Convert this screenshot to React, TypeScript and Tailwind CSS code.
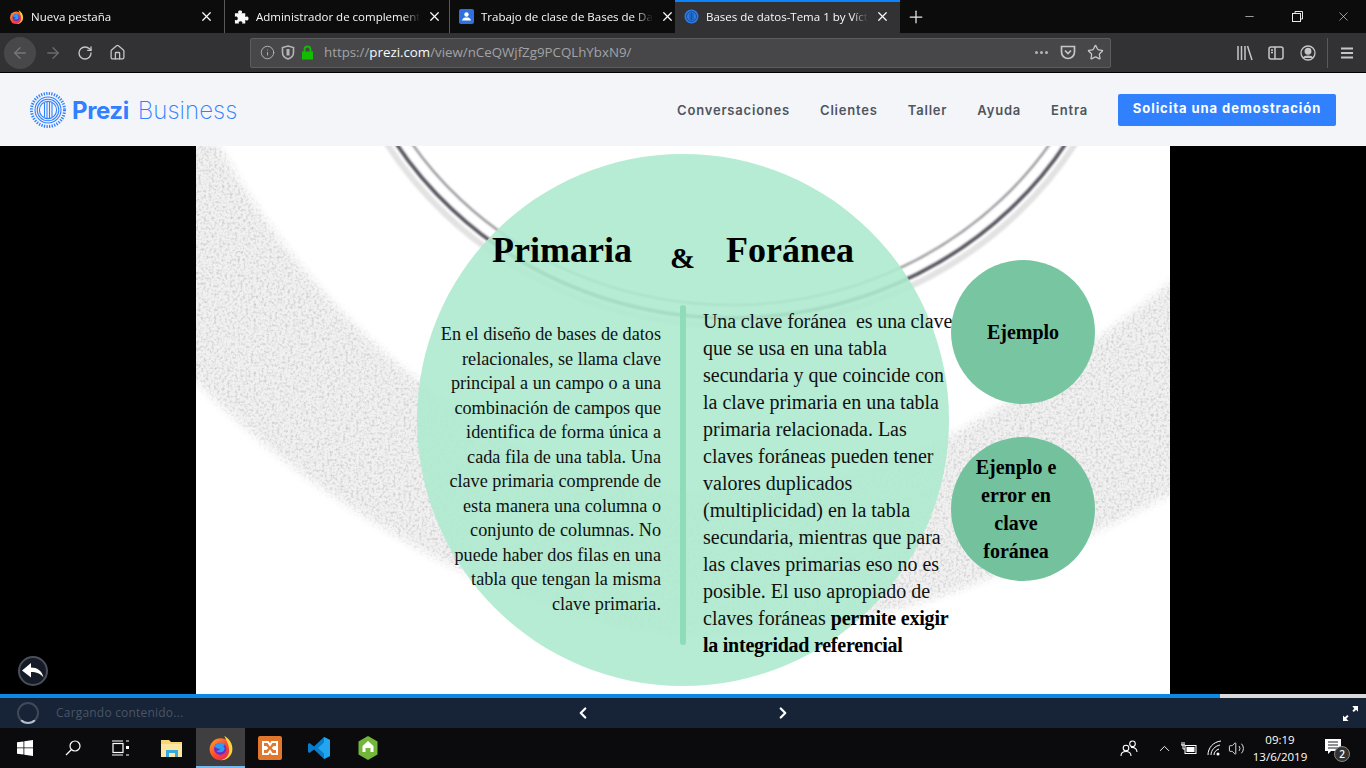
import React from 'react';
import {
  ArrowLeft,
  ArrowRight,
  RotateCw,
  Home,
  Info,
  Star,
  X,
  Plus,
  Minus,
  ChevronLeft,
  ChevronRight,
  ChevronUp,
  Volume2,
} from 'lucide-react';

const FirefoxIcon = ({ size = 16 }: { size?: number }) => (
  <svg width={size} height={size} viewBox="0 0 32 32">
    <defs>
      <linearGradient id="ff" x1="0" y1="0" x2="1" y2="1">
        <stop offset="0" stopColor="#ffa62e" />
        <stop offset="0.5" stopColor="#ff4a2a" />
        <stop offset="1" stopColor="#d81f6b" />
      </linearGradient>
    </defs>
    <circle cx="15.500" cy="17.500" r="13.500" fill="url(#ff)" />
    <path d="M20 1c6 3.500 10.500 9.500 10 17-.5 7.500-6.500 13-14 13 6.500-2 10-6.500 10-12 0-7-3.500-12-6-18z" fill="#ffd43a" />
    <circle cx="15" cy="17" r="7.500" fill="#6a2bc4" />
    <path d="M8 14c2-4 7-5.500 11-4 2.500 1 1.500 3.500-1 3.500 2.500 1 3.500 3.500 1.500 6-2.500 2.500-7 2.500-9.500 0 2.500 0 5-1 5-2.500-2.500 0-5.500-1-7-3z" fill="#2d9cf0" />
  </svg>
);

const PuzzleIcon = () => (
  <svg width="16" height="16" viewBox="0 0 16 16" fill="#f9f9fa">
    <path d="M1 4h4c-1-1-1-3 1.500-3S9 3 8 4h4v4c1-1 3.500-1 3.500 1.500S13 12 12 11v4H8.500c1-1 .5-2.500-1.500-2.500S4.500 14 5.500 15H1v-4c1 1 3 .5 3-1.500S2 7 1 8z" />
  </svg>
);

const ClassroomIcon = () => (
  <svg width="15" height="15" viewBox="0 0 15 15">
    <rect width="15" height="15" rx="2" fill="#2f6fde" />
    <circle cx="7.500" cy="5.500" r="2.200" fill="#fff" />
    <path d="M3 11.500c.5-2.500 2.500-3 4.500-3s4 .5 4.500 3z" fill="#fff" />
  </svg>
);

const PreziFavicon = () => (
  <svg width="15" height="15" viewBox="0 0 15 15" fill="none">
    <circle cx="7.500" cy="7.500" r="7" fill="#2f7ce0" />
    <circle cx="7.500" cy="7.500" r="5" stroke="#0d3f8a" strokeWidth="0.800" />
    <path d="M6 4v7M7.500 3.500v8M9 4v7" stroke="#0d3f8a" strokeWidth="0.700" />
  </svg>
);

const PreziLogo = () => (
  <svg width="36" height="36" viewBox="0 0 36 36" fill="none" stroke="#3181ff">
    <circle cx="18" cy="18" r="16.500" strokeWidth="3" strokeDasharray="1.300 1.300" />
    <circle cx="18" cy="18" r="13" strokeWidth="1.100" />
    <circle cx="18" cy="18" r="10.800" strokeWidth="1.100" />
    <circle cx="18" cy="18" r="8.600" strokeWidth="1.100" />
    <path d="M14.500 11v14M17 10v16M19.500 10v16M22 11v14" strokeWidth="1.100" />
  </svg>
);

const Tab = ({
  icon,
  title,
  active,
  divider,
}: {
  icon: React.ReactNode;
  title: string;
  active?: boolean;
  divider?: boolean;
}) => (
  <div
    className={`relative flex h-full w-[225px] shrink-0 items-center gap-[7px] pl-[9px] pr-[11px] ${
      active ? 'bg-[#323234]' : ''
    }`}
  >
    {active && <div className="absolute left-0 right-0 top-0 h-[2px] bg-[#0a84ff]" />}
    <div className="flex w-[15px] shrink-0 items-center justify-center">{icon}</div>
    <div className="flex-1 whitespace-nowrap pt-px text-[11.500px] text-[#f9f9fa] [mask-image:linear-gradient(to_right,black_90%,transparent)]">
      {title}
    </div>
    <X size={15} strokeWidth={2} className="shrink-0 text-[#f9f9fa]" />
    {divider && <div className="absolute bottom-0 right-0 top-0 w-px bg-[#58585a]" />}
  </div>
);

const TabBar = () => (
  <div className="flex h-[33px] items-stretch bg-[#0c0c0d] font-['Open_Sans',sans-serif]">
    <Tab icon={<FirefoxIcon />} title="Nueva pestaña" divider />
    <Tab icon={<PuzzleIcon />} title="Administrador de complement" divider />
    <Tab icon={<ClassroomIcon />} title="Trabajo de clase de Bases de Da" />
    <Tab icon={<PreziFavicon />} title="Bases de datos-Tema 1 by Víct" active />
    <div className="ml-[6px] flex items-center">
      <Plus size={20} strokeWidth={1.500} className="text-[#e8e8e8]" />
    </div>
    <div className="ml-auto flex items-center text-[#e8e8e8]">
      <div className="flex w-[46px] justify-center pr-[4px]">
        <Minus size={13} strokeWidth={1.200} />
      </div>
      <div className="flex w-[46px] justify-center">
        <svg width="11" height="11" viewBox="0 0 11 11" fill="none" stroke="currentColor">
          <rect x="0.500" y="2.500" width="8" height="8" />
          <path d="M3 2.500V.5h7.500V8H8.500" />
        </svg>
      </div>
      <div className="flex w-[46px] justify-center">
        <X size={15} strokeWidth={1} />
      </div>
    </div>
  </div>
);

const ToolbarIcons = () => (
  <div className="ml-auto flex items-center text-[#c6c6c8]">
    <svg width="18" height="16" viewBox="0 0 18 16" fill="none" stroke="currentColor" strokeWidth="1.500">
      <path d="M2 1v14M5.500 1v14M9 1v14M11.500 1l4.500 14" />
    </svg>
    <svg width="16" height="14" viewBox="0 0 16 14" fill="none" stroke="currentColor" strokeWidth="1.500" className="ml-[14px]">
      <rect x="1" y="1" width="14" height="12" rx="2" />
      <path d="M7 1v12M3 4h2M3 6.500h2" />
    </svg>
    <svg width="16" height="16" viewBox="0 0 16 16" fill="none" stroke="currentColor" strokeWidth="1.300" className="ml-[16px]">
      <circle cx="8" cy="8" r="7" />
      <circle cx="8" cy="6.300" r="2.800" fill="currentColor" />
      <path d="M3.500 13c1-2.500 8-2.500 9 0" fill="currentColor" />
    </svg>
    <div className="ml-[11px] h-[30px] w-px bg-[#5a5a5c]" />
    <svg width="14" height="12" viewBox="0 0 14 12" stroke="currentColor" strokeWidth="1.800" className="ml-[12px] mr-[12px]">
      <path d="M1 1.500h12M1 6h12M1 10.500h12" />
    </svg>
  </div>
);

const Toolbar = () => (
  <div className="flex h-[40px] items-center border-b border-black bg-[#323234] font-['Open_Sans',sans-serif]">
    <div className="ml-[4px] flex h-[32px] w-[32px] items-center justify-center rounded-full bg-[#48484a]">
      <ArrowLeft size={18} strokeWidth={1.800} className="text-[#77777a]" />
    </div>
    <ArrowRight size={18} strokeWidth={1.800} className="ml-[8px] text-[#6b6b6e]" />
    <RotateCw size={16} strokeWidth={2} className="ml-[15px] text-[#c6c6c8]" />
    <Home size={17} strokeWidth={1.800} className="ml-[16px] text-[#c6c6c8]" />
    <div className="ml-[124px] flex h-[30px] w-[861px] items-center rounded-[2px] border border-[#5d5d5f] bg-[#474749] pl-[9px] pr-[6px]">
      <Info size={15} strokeWidth={1.500} className="text-[#b5b5b8]" />
      <svg width="14" height="15" viewBox="0 0 14 15" fill="none" stroke="#b5b5b8" strokeWidth="1.600" className="ml-[6px]">
        <path d="M7 1l5.500 1.500v5c0 3-2.500 5.500-5.500 6.500-3-1-5.500-3.500-5.500-6.500v-5z" />
        <path d="M7 4v6.500" strokeWidth="3" />
      </svg>
      <svg width="13" height="15" viewBox="0 0 13 15" fill="none" className="ml-[6px]">
        <path d="M3.500 7V4.500a3 3 0 0 1 6 0V7" stroke="#12bc00" strokeWidth="1.800" />
        <rect x="1" y="6.500" width="11" height="8" fill="#12bc00" />
      </svg>
      <div className="ml-[10px] whitespace-nowrap pt-px text-[13.300px] text-[#a3a3a6]">
        https://<span className="text-[#f9f9fa]">prezi.com</span>/view/nCeQWjfZg9PCQLhYbxN9/
      </div>
      <div className="ml-auto flex items-center gap-[2px] pr-[1px]">
        <span className="h-[3px] w-[3px] rounded-full bg-[#b5b5b8]" />
        <span className="h-[3px] w-[3px] rounded-full bg-[#b5b5b8]" />
        <span className="h-[3px] w-[3px] rounded-full bg-[#b5b5b8]" />
      </div>
      <svg width="16" height="15" viewBox="0 0 16 15" fill="none" stroke="#c6c6c8" strokeWidth="1.700" className="ml-[11px]">
        <path d="M1.500 1.500h13v5.500a6.500 6.500 0 0 1-13 0z" />
        <path d="M5 5.500l3 3 3-3" />
      </svg>
      <Star size={17} strokeWidth={1.800} className="ml-[11px] text-[#c6c6c8]" />
    </div>
    <ToolbarIcons />
  </div>
);

const SiteNav = () => (
  <div className="flex h-[73px] items-center bg-[#f4f5f9] pl-[30px] pr-[30px] font-['Inter',sans-serif]">
    <PreziLogo />
    <div className="ml-[6px] flex items-baseline pt-[2px] text-[24px] text-[#3181ff]">
      <span className="font-bold tracking-[-0.4px]">Prezi</span>
      <span className="ml-[9px] font-extralight tracking-[0.05px]">Business</span>
    </div>
    <nav className="ml-auto flex items-center gap-[30px] pt-[2px] text-[13px] font-semibold tracking-[0.8px] text-[#4f5560]">
      <span>Conversaciones</span>
      <span>Clientes</span>
      <span>Taller</span>
      <span>Ayuda</span>
      <span>Entra</span>
    </nav>
    <button className="ml-[30px] flex h-[32px] w-[218px] items-center justify-center rounded-[2px] bg-[#3181ff] pb-px text-[13px] font-bold tracking-[0.95px] text-white">
      Solicita una demostración
    </button>
  </div>
);

const leftLines = [
  'En el diseño de bases de datos',
  'relacionales, se llama clave',
  'principal a un campo o a una',
  'combinación de campos que',
  'identifica de forma única a',
  'cada fila de una tabla. Una',
  'clave primaria comprende de',
  'esta manera una columna o',
  'conjunto de columnas. No',
  'puede haber dos filas en una',
  'tabla que tengan la misma',
  'clave primaria.',
];

const rightLines = [
  'que se usa en una tabla',
  'secundaria y que coincide con',
  'la clave primaria en una tabla',
  'primaria relacionada. Las',
  'claves foráneas pueden tener',
  'valores duplicados',
  '(multiplicidad) en la tabla',
  'secundaria, mientras que para',
  'las claves primarias eso no es',
  'posible. El uso apropiado de',
];

const SlideBackdrop = () => (
  <svg width="974" height="548" viewBox="0 0 974 548" fill="none" className="absolute inset-0">
    <defs>
      <filter id="grit" x="-5%" y="-5%" width="110%" height="110%">
        <feTurbulence type="fractalNoise" baseFrequency="0.38" numOctaves="2" seed="4" result="n" />
        <feColorMatrix
          in="n"
          type="matrix"
          values="0 0 0 0 0.6  0 0 0 0 0.6  0 0 0 0 0.6  0 0 0 2.4 -1.05"
          result="speck"
        />
        <feGaussianBlur in="SourceAlpha" stdDeviation="4" result="soft" />
        <feComposite in="speck" in2="soft" operator="in" result="grain" />
        <feFlood floodColor="#f1f1f1" result="base" />
        <feComposite in="base" in2="soft" operator="in" result="tint" />
        <feMerge>
          <feMergeNode in="tint" />
          <feMergeNode in="grain" />
        </feMerge>
      </filter>
      <filter id="soft-line" x="-5%" y="-5%" width="110%" height="110%">
        <feGaussianBlur stdDeviation="0.800" />
      </filter>
    </defs>
    <path
      d="M-20 -10L18 -10C70 90 150 180 223 235C320 310 420 345 490 345C600 345 680 325 754 290C830 250 900 195 990 125L990 340C900 387 800 435 707 461C620 485 550 492 490 490C400 485 320 450 250 417C160 370 70 310 -20 215Z"
      fill="#000"
      filter="url(#grit)"
    />
    <g filter="url(#soft-line)">
      <ellipse cx="535" cy="-200" rx="403" ry="380" stroke="#e2e2e2" strokeWidth="6" />
      <ellipse cx="535" cy="-200" rx="395" ry="372" stroke="#4e4e56" strokeWidth="3.500" />
      <ellipse cx="535" cy="-200" rx="382" ry="359" stroke="#85858a" strokeWidth="2" />
    </g>
  </svg>
);

const Slide = () => (
  <div className="relative h-full w-[974px] overflow-hidden bg-white font-['Liberation_Serif',serif] text-[#111]">
    <SlideBackdrop />
    <div className="absolute left-[221px] top-[8px] h-[532px] w-[532px] rounded-full bg-[#adeace]/90" />
    <div className="absolute left-[484px] top-[159px] h-[340px] w-[6px] rounded-full bg-[#8fdcb8]" />

    <h1 className="absolute left-[296px] top-[82px] text-[36px] font-bold leading-[44px] text-black">Primaria</h1>
    <div className="absolute left-[474px] top-[92px] text-[30px] font-bold leading-[40px] text-black">&amp;</div>
    <h1 className="absolute left-[530px] top-[82px] text-[36px] font-bold leading-[44px] text-black">Foránea</h1>

    <div className="absolute right-[509px] top-[176px] whitespace-nowrap text-right text-[18.200px] leading-[24.550px]">
      {leftLines.map((line) => (
        <div key={line}>{line}</div>
      ))}
    </div>

    <div className="absolute left-[507px] top-[162px] whitespace-pre text-[20px] leading-[27px]">
      <div className="tracking-[-0.13px]">Una clave foránea  es una clave</div>
      {rightLines.map((line) => (
        <div key={line}>{line}</div>
      ))}
      <div>
        claves foráneas <b className="tracking-[-0.2px] text-black">permite exigir</b>
      </div>
      <div>
        <b className="tracking-[-0.25px] text-black">la integridad referencial</b>
      </div>
    </div>

    <div className="absolute left-[755px] top-[114px] flex h-[144px] w-[144px] items-center justify-center rounded-full bg-[#78c6a1] text-[20px] font-bold text-black">
      Ejemplo
    </div>
    <div className="absolute left-[755px] top-[291px] flex h-[144px] w-[144px] items-center justify-center rounded-full bg-[#73c29d] pr-[14px] text-center text-[20px] font-bold leading-[28px] text-black">
      <div>
        Ejenplo e
        <br />
        error en
        <br />
        clave
        <br />
        foránea
      </div>
    </div>
  </div>
);

const Viewer = () => (
  <div className="relative flex flex-1 justify-center bg-black">
    <Slide />
    <button className="absolute bottom-[8px] left-[18px] flex h-[30px] w-[30px] items-center justify-center rounded-full border-2 border-[#4a4f5a] bg-[#141a26]">
      <svg width="22" height="16" viewBox="0 0 22 16" fill="#fff">
        <path d="M0 7.500L9 0v4.500c6 0 11 3 12.500 10-3-4-7-5.500-12.500-5.500v5.500z" />
      </svg>
    </button>
  </div>
);

const ProgressBar = () => (
  <div className="h-[4px] bg-[#d9d9d9]">
    <div className="h-full w-[1220px] bg-[#0a8ae6]" />
  </div>
);

const ControlBar = () => (
  <div className="relative flex h-[30px] items-center bg-[#172337] pl-[17px] font-['Open_Sans',sans-serif]">
    <div className="h-[22px] w-[22px] rounded-full border-2 border-[#3f4958] border-b-[#b9bfc9]" />
    <span className="ml-[17px] text-[12px] tracking-[0.2px] text-[#4a5566]">Cargando contenido...</span>
    <div className="ml-[391px] flex w-[218px] items-center justify-between">
      <ChevronLeft size={18} strokeWidth={3} className="text-white" />
      <ChevronRight size={18} strokeWidth={3} className="text-white" />
    </div>
    <svg width="15" height="15" viewBox="0 0 16 16" fill="#fff" className="ml-auto mr-[8px]">
      <path d="M10 0h6v6l-2-2-2.500 2.500-1.500-1.500L12 3zM6 16H0v-6l2 2 2.500-2.500L6 11l-2.500 2.500z" />
    </svg>
  </div>
);

const TaskIcon = ({
  children,
  active,
  className = '',
}: {
  children: React.ReactNode;
  active?: boolean;
  className?: string;
}) => (
  <div
    className={`relative flex h-full w-[49px] items-center justify-center ${active ? 'bg-[#3f3f41]' : ''} ${className}`}
  >
    {children}
    {active && <div className="absolute bottom-0 left-0 right-0 h-[2px] bg-[#76b9ed]" />}
  </div>
);

const Taskbar = () => (
  <div className="flex h-[40px] items-center bg-[#0b0b0e] font-['Open_Sans',sans-serif] text-white">
    <TaskIcon>
      <svg width="16" height="16" viewBox="0 0 16 16" fill="#fff">
        <path d="M0 2.300L6.500 1.400V7.500H0zM7.300 1.300L16 0v7.500H7.300zM0 8.300h6.500v6.300L0 13.700zM7.300 8.300H16V16l-8.700-1.300z" />
      </svg>
    </TaskIcon>
    <TaskIcon className="pr-[2px]">
      <svg width="16" height="16" viewBox="0 0 16 16" fill="none" stroke="#fff" strokeWidth="1.200">
        <circle cx="10" cy="6" r="5" />
        <path d="M6.500 9.500L1 15" />
      </svg>
    </TaskIcon>
    <TaskIcon className="pr-[4px]">
      <svg width="17" height="16" viewBox="0 0 17 16" fill="none" stroke="#fff" strokeWidth="1.200">
        <rect x="1" y="3.500" width="10" height="9" />
        <path d="M0 1h11M0 15h11M14 1h3M14 15h3" />
        <rect x="14" y="6" width="3" height="3" fill="#fff" stroke="none" />
      </svg>
    </TaskIcon>
    <TaskIcon>
      <svg width="22" height="20" viewBox="0 0 22 20">
        <path d="M0 2h8l2 2h11v15H0z" fill="#f7d774" />
        <path d="M0 6h21v13H0z" fill="#fbe7a1" />
        <path d="M5 12h12v7h-3v-4H8v4H5z" fill="#36a9e1" />
      </svg>
    </TaskIcon>
    <TaskIcon active>
      <FirefoxIcon size={26} />
    </TaskIcon>
    <TaskIcon>
      <svg width="24" height="24" viewBox="0 0 24 24">
        <rect width="24" height="24" rx="2" fill="#e2762a" />
        <path
          d="M5 6h5l2 3 2-3h5v5h-3l-1 1 1 1h3v5h-5l-2-3-2 3H5v-5h3l1-1-1-1H5z"
          fill="none"
          stroke="#fff"
          strokeWidth="2"
        />
      </svg>
    </TaskIcon>
    <TaskIcon>
      <svg width="24" height="24" viewBox="0 0 24 24">
        <path d="M17 1l6 3v16l-6 3L7 13.500 2.500 17 1 16v-8l1.500-1L7 10.500z" fill="#0a7ccc" />
        <path d="M17 6.500L11 12l6 5.500zM17 1l6 3v16l-6 3z" fill="#22a5ee" />
      </svg>
    </TaskIcon>
    <TaskIcon>
      <svg width="20" height="24" viewBox="0 0 20 24">
        <path d="M10 0l9.500 5.500v13L10 24 .5 18.500v-13z" fill="#72b63a" />
        <path d="M10 5l5.500 5v6h-3v-4h-5v4h-3v-6z" fill="#fff" />
      </svg>
    </TaskIcon>

    <div className="ml-auto flex h-full items-center">
      <svg width="18" height="17" viewBox="0 0 18 17" fill="none" stroke="#fff" strokeWidth="1.100">
        <circle cx="6" cy="8" r="2.800" />
        <path d="M1 16c0-3 2-4.500 5-4.500s5 1.500 5 4.500" />
        <circle cx="12.500" cy="3.800" r="2.800" />
        <path d="M11 7.500c3-.5 6 1 6 4.500" />
      </svg>
      <ChevronUp size={17} strokeWidth={1.300} className="ml-[18px]" />
      <svg width="17" height="13" viewBox="0 0 17 13" fill="none" stroke="#fff" className="ml-[7px]">
        <rect x="5" y="3.500" width="11" height="8" />
        <rect x="6.500" y="5" width="8" height="5" fill="#fff" stroke="none" />
        <path d="M1 3h4M2 0v3M4 0v3M3 3v4h2" />
      </svg>
      <svg width="16" height="16" viewBox="0 0 16 16" fill="none" stroke="#fff" className="ml-[10px]">
        <path d="M1 15C1 8 6 2 14 1M4 15c0-5 4-9 9-10M7 15c0-3 2-5 5-6" />
        <circle cx="11" cy="14" r="1.500" fill="#fff" stroke="none" />
      </svg>
      <Volume2 size={17} strokeWidth={1.200} className="ml-[5px]" />
      <div className="ml-[3px] flex w-[64px] flex-col items-center text-[11.500px] leading-[17px]">
        <span>09:19</span>
        <span>13/6/2019</span>
      </div>
      <div className="relative ml-[13px] mr-[25px] h-[18px] w-[16px]">
        <svg width="16" height="16" viewBox="0 0 16 16">
          <path d="M0 0h16v12H6l-3 3v-3H0z" fill="#fff" />
          <path d="M3 3h10M3 6h10M3 9h10" stroke="#222" />
        </svg>
        <div className="absolute -bottom-[5px] -right-[9px] flex h-[16px] w-[16px] items-center justify-center rounded-full border border-[#888] bg-[#333] text-[10px] font-semibold">
          2
        </div>
      </div>
    </div>
  </div>
);

export default function App() {
  return (
    <div className="flex h-[768px] w-[1366px] flex-col overflow-hidden">
      <TabBar />
      <Toolbar />
      <SiteNav />
      <Viewer />
      <ProgressBar />
      <ControlBar />
      <Taskbar />
    </div>
  );
}
